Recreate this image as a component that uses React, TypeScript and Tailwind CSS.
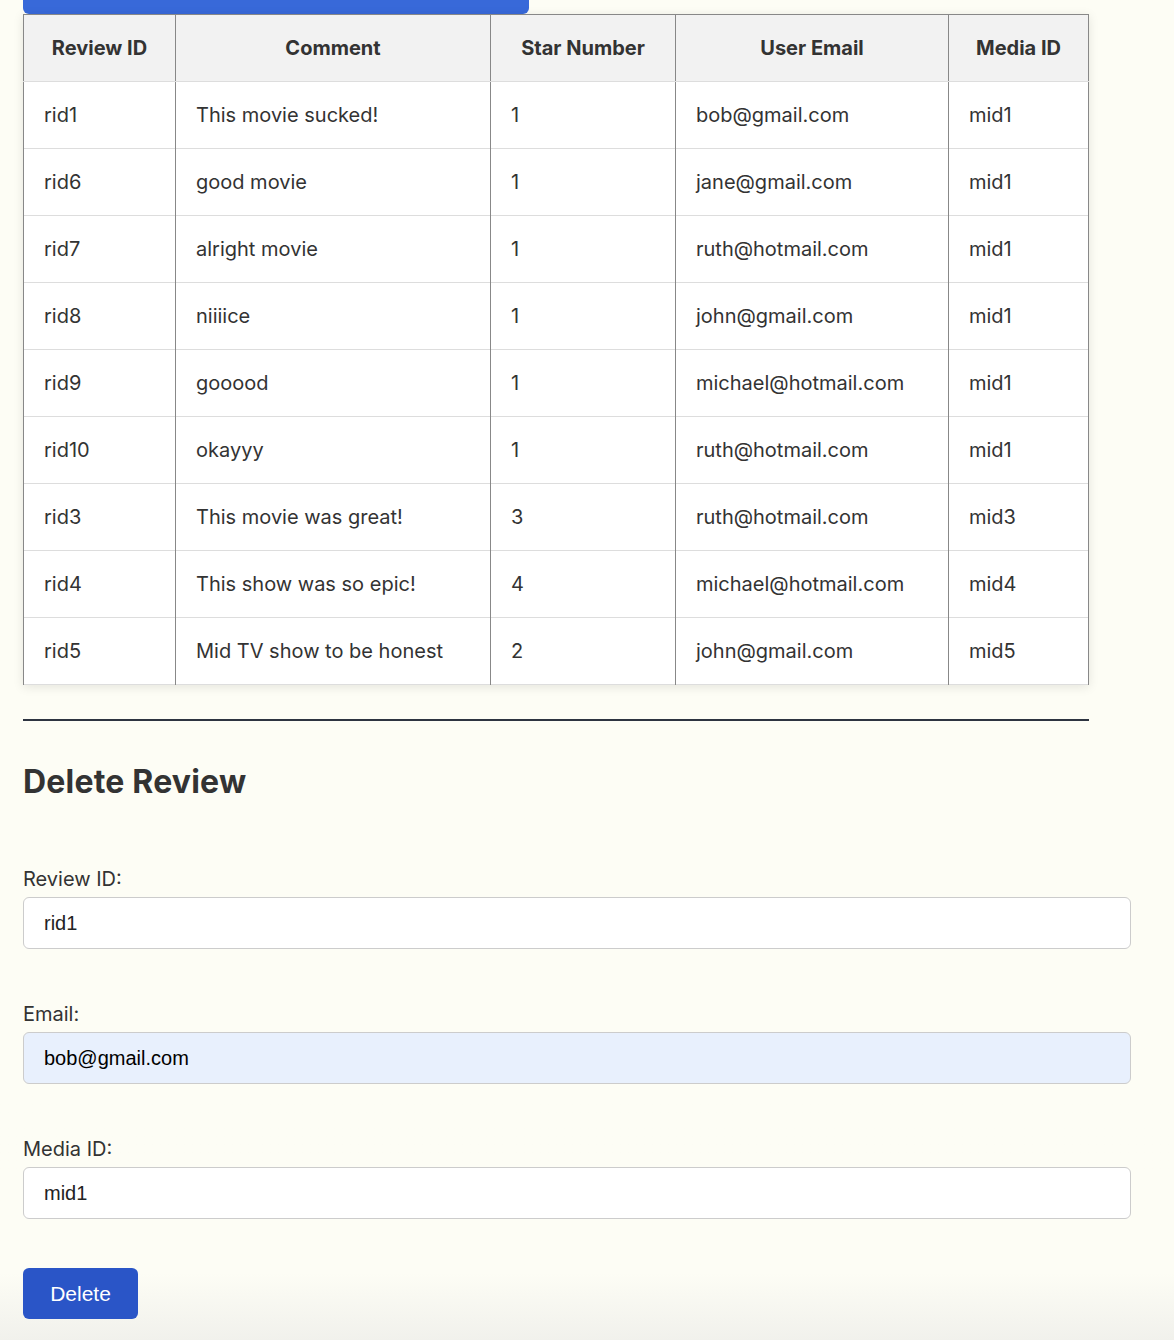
import React from "react";

const REVIEWS = [
  { id: "rid1", comment: "This movie sucked!", stars: 1, email: "bob@gmail.com", media: "mid1" },
  { id: "rid6", comment: "good movie", stars: 1, email: "jane@gmail.com", media: "mid1" },
  { id: "rid7", comment: "alright movie", stars: 1, email: "ruth@hotmail.com", media: "mid1" },
  { id: "rid8", comment: "niiiice", stars: 1, email: "john@gmail.com", media: "mid1" },
  { id: "rid9", comment: "gooood", stars: 1, email: "michael@hotmail.com", media: "mid1" },
  { id: "rid10", comment: "okayyy", stars: 1, email: "ruth@hotmail.com", media: "mid1" },
  { id: "rid3", comment: "This movie was great!", stars: 3, email: "ruth@hotmail.com", media: "mid3" },
  { id: "rid4", comment: "This show was so epic!", stars: 4, email: "michael@hotmail.com", media: "mid4" },
  { id: "rid5", comment: "Mid TV show to be honest", stars: 2, email: "john@gmail.com", media: "mid5" },
];

const FIELDS = [
  { label: "Review ID:", value: "rid1", filled: false },
  { label: "Email:", value: "bob@gmail.com", filled: true },
  { label: "Media ID:", value: "mid1", filled: false },
];

export default function App() {
  return (
    <div className="min-h-[1340px] text-[#333] font-['Inter','Noto_Sans',sans-serif] bg-gradient-to-b from-[#fdfdf5] from-[95%] to-[#f1f1ec]">
      <div className="pl-[23px] pb-[21px]">
        {/* top button, cut off by the scroll */}
        <div className="w-[506px] h-[14px] bg-[#3869d9] rounded-b-md" />

        <table className="w-[1066px] border-collapse border border-[#888] bg-white shadow-[0_2px_10px_rgba(0,0,0,0.1)] text-[20px]">
          <thead>
            <tr className="bg-[#f2f2f2]">
              <th className="h-[67px] w-[152px] border border-[#888] border-b-[#ddd] font-bold text-center">Review ID</th>
              <th className="w-[315px] border border-[#888] border-b-[#ddd] font-bold text-center">Comment</th>
              <th className="w-[185px] border border-[#888] border-b-[#ddd] font-bold text-center">Star Number</th>
              <th className="w-[273px] border border-[#888] border-b-[#ddd] font-bold text-center">User Email</th>
              <th className="border border-[#888] border-b-[#ddd] font-bold text-center">Media ID</th>
            </tr>
          </thead>
          <tbody>
            {REVIEWS.map((r) => (
              <tr key={r.id} className="border-b border-[#ddd]">
                <td className="h-[67px] px-5 border-x border-[#888]">{r.id}</td>
                <td className="px-5 border-x border-[#888]">{r.comment}</td>
                <td className="px-5 border-x border-[#888]">{r.stars}</td>
                <td className="px-5 border-x border-[#888]">{r.email}</td>
                <td className="px-5 border-x border-[#888]">{r.media}</td>
              </tr>
            ))}
          </tbody>
        </table>

        <hr className="w-[1066px] mt-[34px] border-0 h-[2px] bg-[#2d3440]" />

        <h2 className="mt-[41px] text-[32px] font-bold leading-[40px] tracking-[0.2px]">Delete Review</h2>

        <form className="mt-[65px] w-[1108px]">
          {FIELDS.map((f, i) => (
            <div key={f.label} className={i > 0 ? "mt-[53px]" : ""}>
              <label className="block text-[20px] leading-[24px] mb-[6px]">{f.label}</label>
              <input
                readOnly
                value={f.value}
                className={
                  f.filled
                    ? "w-full h-[52px] px-5 rounded-md border border-[#ccc] bg-[#e8f0fd] text-[20px] text-black font-['Liberation_Sans',Arial,sans-serif] outline-none"
                    : "w-full h-[52px] px-5 rounded-md border border-[#ccc] bg-white text-[20px] text-[#222] font-['Liberation_Sans',Arial,sans-serif] outline-none"
                }
              />
            </div>
          ))}
          <button
            type="button"
            className="mt-[49px] w-[115px] h-[51px] rounded-md bg-[#2a55c7] text-white text-[21px] font-['Liberation_Sans',Arial,sans-serif]"
          >
            Delete
          </button>
        </form>
      </div>
    </div>
  );
}
